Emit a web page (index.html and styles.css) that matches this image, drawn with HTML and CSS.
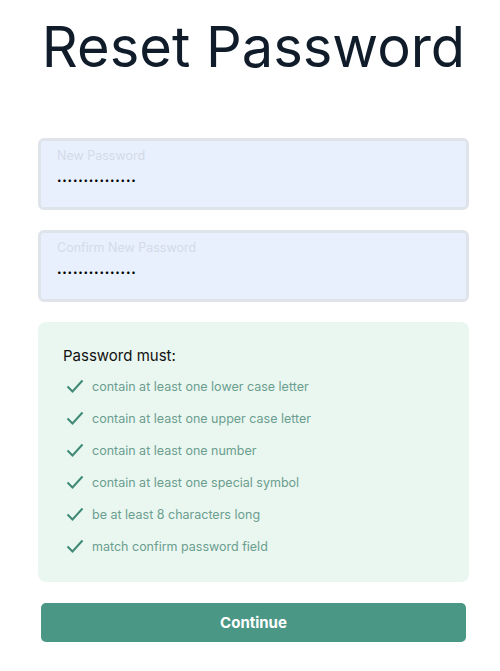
FILE: index.html
```html
<!DOCTYPE html>
<html lang="en">
<head>
    <meta charset="UTF-8">
    <meta name="viewport" content="width=device-width, initial-scale=1.0">
    <title>Reset Password</title>
    <link rel="stylesheet" href="styles.css">
</head>
<body>
    <main class="reset-container">
        <h1 class="title">Reset Password</h1>

        <form class="reset-form">
            <!-- Password fields -->
            <div class="field">
                <label class="field-label">New Password</label>
                <div class="field-value">•••••••••••••••</div>
            </div>

            <div class="field">
                <label class="field-label">Confirm New Password</label>
                <div class="field-value">•••••••••••••••</div>
            </div>

            <!-- Rules -->
            <section class="rules">
                <h2>Password must:</h2>
                <ul>
                    <li><svg viewBox="0 0 18 14"><path d="M1.5 7.5 L6.5 12.5 L16.5 1.5"/></svg>contain at least one lower case letter</li>
                    <li><svg viewBox="0 0 18 14"><path d="M1.5 7.5 L6.5 12.5 L16.5 1.5"/></svg>contain at least one upper case letter</li>
                    <li><svg viewBox="0 0 18 14"><path d="M1.5 7.5 L6.5 12.5 L16.5 1.5"/></svg>contain at least one number</li>
                    <li><svg viewBox="0 0 18 14"><path d="M1.5 7.5 L6.5 12.5 L16.5 1.5"/></svg>contain at least one special symbol</li>
                    <li><svg viewBox="0 0 18 14"><path d="M1.5 7.5 L6.5 12.5 L16.5 1.5"/></svg>be at least 8 characters long</li>
                    <li><svg viewBox="0 0 18 14"><path d="M1.5 7.5 L6.5 12.5 L16.5 1.5"/></svg>match confirm password field</li>
                </ul>
            </section>

            <button type="button" class="btn-continue">Continue</button>
        </form>
    </main>
</body>
</html>
```

FILE: styles.css
```css
* {
    margin: 0;
    padding: 0;
    box-sizing: border-box;
}

body {
    font-family: 'Inter', 'Liberation Sans', sans-serif;
    background-color: #ffffff;
    color: #0f1b2a;
}

.reset-container {
    padding: 0 31px 0 38px;
}

.title {
    font-size: 56px;
    font-weight: 400;
    line-height: 1;
    white-space: nowrap;
    text-align: center;
    padding-top: 19px;
    margin-bottom: 63px;
    color: #101c2a;
}

.field {
    height: 72px;
    background-color: #e8f0fe;
    border: 3px solid #dfe3ea;
    border-radius: 6px;
    padding: 7px 16px 0 16px;
    margin-bottom: 20px;
}

.field-label {
    display: block;
    font-size: 12.5px;
    line-height: 15px;
    color: #d3dbe6;
}

.field-value {
    font-size: 8px;
    letter-spacing: 0.8px;
    line-height: 12px;
    margin-top: 11px;
    color: #000;
}

.rules {
    background-color: #eaf6f0;
    border-radius: 8px;
    padding: 25px 25px 20px 25px;
}

.rules h2 {
    font-size: 15px;
    font-weight: 400;
    line-height: 18px;
    color: #111;
    margin-bottom: 5px;
}

.rules ul {
    list-style: none;
}

.rules li {
    display: flex;
    align-items: center;
    height: 32px;
    font-size: 12.5px;
    color: #6a9e8f;
}

.rules svg {
    width: 18px;
    height: 14px;
    margin: 0 8px 0 3px;
    fill: none;
    stroke: #3e8a76;
    stroke-width: 2;
}

.btn-continue {
    display: block;
    width: 425px;
    height: 39px;
    margin: 21px 0 0 3px;
    background-color: #4a9785;
    color: white;
    border: none;
    border-radius: 5px;
    font-family: inherit;
    font-size: 15px;
    font-weight: 700;
    cursor: pointer;
}
```
